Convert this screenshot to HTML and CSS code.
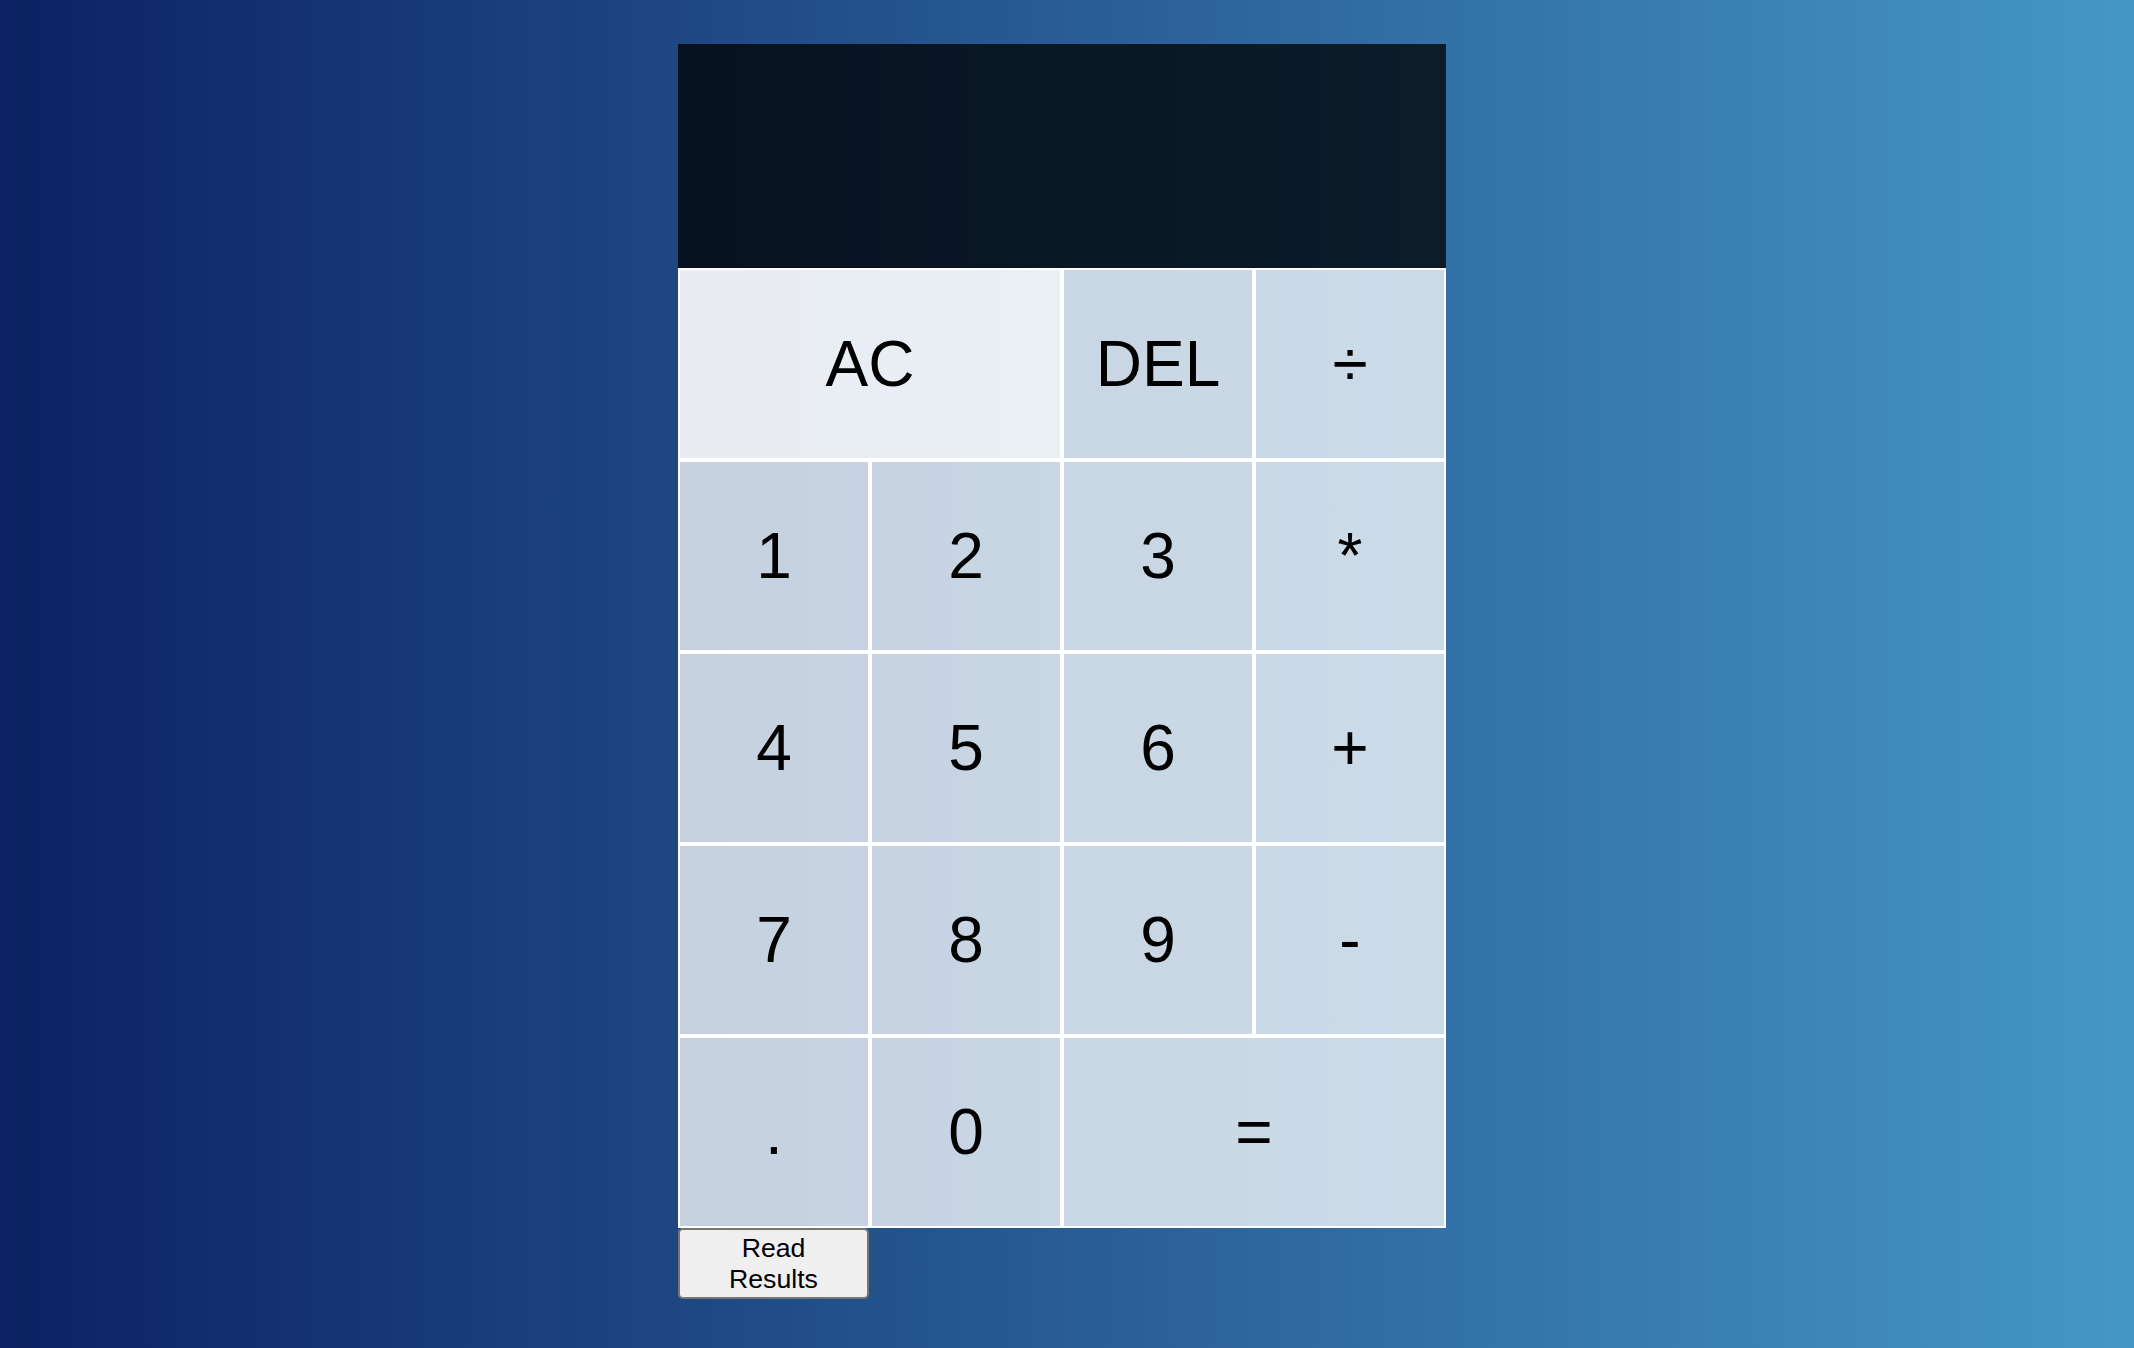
FILE: index.html
```html
<!DOCTYPE html>
<html lang="en">
<head>
<meta charset="utf-8">
<title>Calculator</title>
<link rel="stylesheet" href="styles.css">
</head>
<body>
<main class="page">
  <div class="stack">
    <div class="calculator-grid">
      <div class="output">
        <div class="previous-operand"></div>
        <div class="current-operand"></div>
      </div>
      <button class="key span-two key-clear">AC</button>
      <button class="key">DEL</button>
      <button class="key">÷</button>
      <button class="key">1</button>
      <button class="key">2</button>
      <button class="key">3</button>
      <button class="key">*</button>
      <button class="key">4</button>
      <button class="key">5</button>
      <button class="key">6</button>
      <button class="key">+</button>
      <button class="key">7</button>
      <button class="key">8</button>
      <button class="key">9</button>
      <button class="key">-</button>
      <button class="key">.</button>
      <button class="key">0</button>
      <button class="key span-two">=</button>
    </div>
    <button class="read-btn">Read Results</button>
  </div>
</main>
</body>
</html>
```

FILE: styles.css
```css
*, *::before, *::after {
  box-sizing: border-box;
}

html, body {
  margin: 0;
  padding: 0;
}

body {
  min-height: 100vh;
  background: linear-gradient(to right, #0c2262, #4597c6);
  font-family: "Liberation Sans", Arial, sans-serif;
}

.page {
  display: flex;
  justify-content: center;
  padding: 44px 10px 0 0;
}

.stack {
  display: flex;
  flex-direction: column;
  align-items: flex-start;
}

.calculator-grid {
  display: grid;
  grid-template-columns: repeat(4, 192px);
  grid-template-rows: 224px repeat(5, 192px);
}

.output {
  grid-column: 1 / -1;
  background-color: rgba(0, 0, 0, 0.75);
  display: flex;
  flex-direction: column;
  align-items: flex-end;
  justify-content: space-around;
  padding: 20px;
  word-break: break-all;
}

.key {
  font-family: "Liberation Sans", Arial, sans-serif;
  font-size: 64px;
  color: #000;
  border: 2px solid #fff;
  outline: none;
  background-color: rgba(255, 255, 255, 0.75);
  cursor: pointer;
  padding: 0;
  margin: 0;
}

.key-clear {
  background-color: rgba(255, 255, 255, 0.9);
}

.span-two {
  grid-column: span 2;
}

.read-btn {
  width: 191px;
  margin: 0;
  padding: 3px 36px;
  font-family: "Liberation Sans", Arial, sans-serif;
  font-size: 26.67px;
  line-height: 1.149;
  color: #000;
  background-color: #efefef;
  border: 2px solid #767676;
  border-radius: 5px;
  text-align: center;
}
```
